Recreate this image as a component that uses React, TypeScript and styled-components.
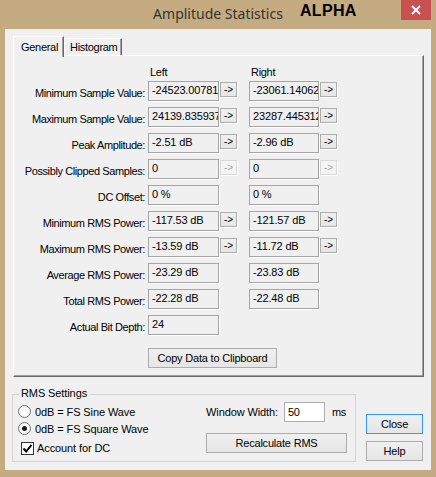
import styled, { createGlobalStyle } from "styled-components";

const GlobalStyle = createGlobalStyle`
  html, body { margin: 0; padding: 0; background: #c4ab81; }
  body {
    font-family: "Liberation Sans", Arial, sans-serif;
    font-size: 11px;
    color: #000;
    letter-spacing: -0.3px;
  }
  * { box-sizing: border-box; }
`;

type Arrow = "on" | "off";
type StatRowData = { label: string; left: string; right?: string; arrow?: Arrow };

const stats: StatRowData[] = [
  { label: "Minimum Sample Value:", left: "-24523.00781", right: "-23061.14062", arrow: "on" },
  { label: "Maximum Sample Value:", left: "24139.835937", right: "23287.445312", arrow: "on" },
  { label: "Peak Amplitude:", left: "-2.51 dB", right: "-2.96 dB", arrow: "on" },
  { label: "Possibly Clipped Samples:", left: "0", right: "0", arrow: "off" },
  { label: "DC Offset:", left: "0 %", right: "0 %" },
  { label: "Minimum RMS Power:", left: "-117.53 dB", right: "-121.57 dB", arrow: "on" },
  { label: "Maximum RMS Power:", left: "-13.59 dB", right: "-11.72 dB", arrow: "on" },
  { label: "Average RMS Power:", left: "-23.29 dB", right: "-23.83 dB" },
  { label: "Total RMS Power:", left: "-22.28 dB", right: "-22.48 dB" },
  { label: "Actual Bit Depth:", left: "24" },
];

export default function App() {
  return (
    <>
      <GlobalStyle />
      <Window>
        <TitleBar>
          <Title>Amplitude Statistics</Title>
          <Watermark>ALPHA</Watermark>
          <CloseX>
            <svg width="10" height="10" viewBox="0 0 10 10">
              <path d="M1 1 L9 9 M9 1 L1 9" stroke="#fff" strokeWidth="2" />
            </svg>
          </CloseX>
        </TitleBar>
        <Client>
          <TabStrip>
            <Tab $active>General</Tab>
            <Tab>Histogram</Tab>
          </TabStrip>
          <Panel>
            <HeaderRow>
              <span />
              <HeaderText>Left</HeaderText>
              <span />
              <span />
              <HeaderText>Right</HeaderText>
            </HeaderRow>
            <StatList>
              {stats.map((s) => (
                <StatRow key={s.label}>
                  <StatLabel>{s.label}</StatLabel>
                  <Field>{s.left}</Field>
                  <ArrowCell>{s.arrow && <ArrowBtn $disabled={s.arrow === "off"}>-&gt;</ArrowBtn>}</ArrowCell>
                  <span />
                  {s.right !== undefined ? <Field>{s.right}</Field> : <span />}
                  <ArrowCell>{s.arrow && <ArrowBtn $disabled={s.arrow === "off"}>-&gt;</ArrowBtn>}</ArrowCell>
                </StatRow>
              ))}
            </StatList>
            <CopyButton>Copy Data to Clipboard</CopyButton>
          </Panel>
          <BottomRow>
            <GroupBox>
              <Legend>RMS Settings</Legend>
              <OptionsCol>
                <OptionRow>
                  <Radio />
                  <span>0dB = FS Sine Wave</span>
                </OptionRow>
                <OptionRow>
                  <Radio $checked />
                  <span>0dB = FS Square Wave</span>
                </OptionRow>
                <CheckRow>
                  <CheckBox>
                    <svg width="11" height="11" viewBox="0 0 11 11">
                      <path d="M1.5 5.5 L4.2 8.5 L9.5 1.8" stroke="#000" strokeWidth="2" fill="none" />
                    </svg>
                  </CheckBox>
                  <span>Account for DC</span>
                </CheckRow>
              </OptionsCol>
              <WindowCol>
                <WidthRow>
                  <WidthLabel>Window Width:</WidthLabel>
                  <TextInput>50</TextInput>
                  <Unit>ms</Unit>
                </WidthRow>
                <PushButton $w={141}>Recalculate RMS</PushButton>
              </WindowCol>
            </GroupBox>
            <DialogButtons>
              <PushButton $w={57} $default>Close</PushButton>
              <PushButton $w={57}>Help</PushButton>
            </DialogButtons>
          </BottomRow>
        </Client>
      </Window>
    </>
  );
}

const Window = styled.div`
  width: 436px;
  height: 477px;
  background: #c4ab81;
  display: flex;
  flex-direction: column;
`;

const TitleBar = styled.div`
  position: relative;
  height: 29px;
  display: flex;
  justify-content: center;
  padding-top: 4px;
`;

const Title = styled.div`
  font-family: "Noto Sans", "Open Sans", sans-serif;
  font-size: 14px;
  line-height: 20px;
  color: #333;
  letter-spacing: 0;
`;

const Watermark = styled.div`
  position: absolute;
  left: 300px;
  top: 2px;
  font-family: "Liberation Sans", Arial, sans-serif;
  font-weight: bold;
  font-size: 16px;
  line-height: 18px;
  letter-spacing: 0.3px;
  color: #000;
`;

const CloseX = styled.div`
  position: absolute;
  right: 5px;
  top: 0;
  width: 30px;
  height: 20px;
  background: #c75050;
  display: flex;
  align-items: center;
  justify-content: center;
`;

const Client = styled.div`
  margin: 0 5px;
  height: 441px;
  background: #f0f0f0;
  padding: 7px 7px 0 8px;
  display: flex;
  flex-direction: column;
`;

const TabStrip = styled.div`
  display: flex;
  align-items: flex-end;
  height: 19px;
  position: relative;
  z-index: 1;
`;

const Tab = styled.div<{ $active?: boolean }>`
  height: ${(p) => (p.$active ? "21px" : "17px")};
  margin-bottom: ${(p) => (p.$active ? "-2px" : "0")};
  padding: ${(p) => (p.$active ? "2px 6px 0 7px" : "0 5px 0 5px")};
  line-height: 16px;
  background: #f0f0f0;
  border-top: 1px solid #fff;
  border-left: 1px solid #fff;
  border-right: 1px solid #696969;
  box-shadow: inset -1px 0 0 #a0a0a0;
  width: ${(p) => (p.$active ? "51px" : "58px")};
  white-space: nowrap;
`;

const Panel = styled.div`
  width: 411px;
  height: 322px;
  border-top: 1px solid #fff;
  border-left: 1px solid #fff;
  border-right: 1px solid #696969;
  border-bottom: 1px solid #696969;
  box-shadow: inset -1px -1px 0 #a0a0a0;
  padding-top: 9px;
  display: flex;
  flex-direction: column;
`;

const columns = "134px 71px 19px 11px 70px 19px";

const HeaderRow = styled.div`
  display: grid;
  grid-template-columns: ${columns};
  height: 14px;
  line-height: 14px;
  margin-bottom: 2px;
`;

const HeaderText = styled.div`
  padding-left: 2px;
`;

const StatList = styled.div`
  display: flex;
  flex-direction: column;
  gap: 6px;
`;

const StatRow = styled.div`
  display: grid;
  grid-template-columns: ${columns};
  height: 20px;
`;

const StatLabel = styled.div`
  text-align: right;
  padding: 4px 3px 0 0;
  line-height: 16px;
  white-space: nowrap;
  letter-spacing: -0.4px;
`;

const Field = styled.div`
  height: 20px;
  border: 1px solid #a5a5a5;
  box-shadow: 1px 1px 0 #fff;
  padding: 0 0 0 3px;
  line-height: 16px;
  white-space: nowrap;
  overflow: hidden;
  letter-spacing: -0.15px;
`;

const ArrowCell = styled.div`
  display: flex;
  align-items: flex-start;
`;

const ArrowBtn = styled.div<{ $disabled?: boolean }>`
  margin: 1px 0 0 1px;
  width: 17px;
  height: 15px;
  border: 1px solid ${(p) => (p.$disabled ? "#d9d9d9" : "#adadad")};
  background: ${(p) => (p.$disabled ? "#f4f4f4" : "linear-gradient(#f0f0f0, #e5e5e5)")};
  color: ${(p) => (p.$disabled ? "#a8a8a8" : "#000")};
  box-shadow: 1px 1px 0 #fff;
  font-size: 10px;
  line-height: 14px;
  text-align: center;
  letter-spacing: 0;
`;

const PushButton = styled.div<{ $w: number; $default?: boolean }>`
  width: ${(p) => p.$w}px;
  height: 20px;
  border: 1px solid ${(p) => (p.$default ? "#3399ff" : "#acacac")};
  background: linear-gradient(#f0f0f0, #e5e5e5);
  display: flex;
  align-items: center;
  justify-content: center;
  font-size: 11px;
  white-space: nowrap;
  letter-spacing: -0.2px;
`;

const CopyButton = styled(PushButton).attrs({ $w: 129 })`
  margin: 13px 0 0 134px;
`;

const BottomRow = styled.div`
  display: flex;
  margin-top: 17px;
`;

const GroupBox = styled.div`
  position: relative;
  margin-left: -1px;
  width: 344px;
  height: 68px;
  border: 1px solid #d5d5d5;
  display: flex;
`;

const Legend = styled.div`
  position: absolute;
  left: 6px;
  top: -9px;
  padding: 0 3px 0 2px;
  background: #f0f0f0;
  line-height: 14px;
  letter-spacing: -0.1px;
`;

const OptionsCol = styled.div`
  flex: 1;
  display: flex;
  flex-direction: column;
  padding: 8px 0 0 5px;
`;

const OptionRow = styled.div`
  display: flex;
  align-items: center;
  gap: 4px;
  height: 17px;
  letter-spacing: -0.1px;
`;

const CheckRow = styled(OptionRow)`
  margin-top: 3px;
  padding-left: 3px;
  gap: 3px;
  height: 16px;
`;

const Radio = styled.span<{ $checked?: boolean }>`
  width: 13px;
  height: 13px;
  border-radius: 50%;
  border: 1px solid #707070;
  background: radial-gradient(circle, #fff 40%, #f0f0f0 100%);
  display: flex;
  align-items: center;
  justify-content: center;
  &::after {
    content: "";
    width: 5px;
    height: 5px;
    border-radius: 50%;
    background: ${(p) => (p.$checked ? "#1a1a1a" : "transparent")};
  }
`;

const CheckBox = styled.span`
  width: 13px;
  height: 13px;
  border: 1px solid #333;
  background: #fff;
  display: flex;
  align-items: center;
  justify-content: center;
`;

const WindowCol = styled.div`
  width: 141px;
  margin-right: 8px;
  padding-top: 7px;
  display: flex;
  flex-direction: column;
  gap: 11px;
`;

const WidthRow = styled.div`
  display: flex;
  align-items: center;
  height: 20px;
`;

const WidthLabel = styled.span`
  width: 78px;
  letter-spacing: -0.1px;
`;

const TextInput = styled.div`
  width: 41px;
  height: 20px;
  border: 1px solid #abadb3;
  background: #fff;
  padding-left: 3px;
  line-height: 18px;
`;

const Unit = styled.span`
  margin-left: 7px;
`;

const DialogButtons = styled.div`
  margin-left: auto;
  margin-right: 1px;
  padding-top: 20px;
  display: flex;
  flex-direction: column;
  gap: 7px;
`;
